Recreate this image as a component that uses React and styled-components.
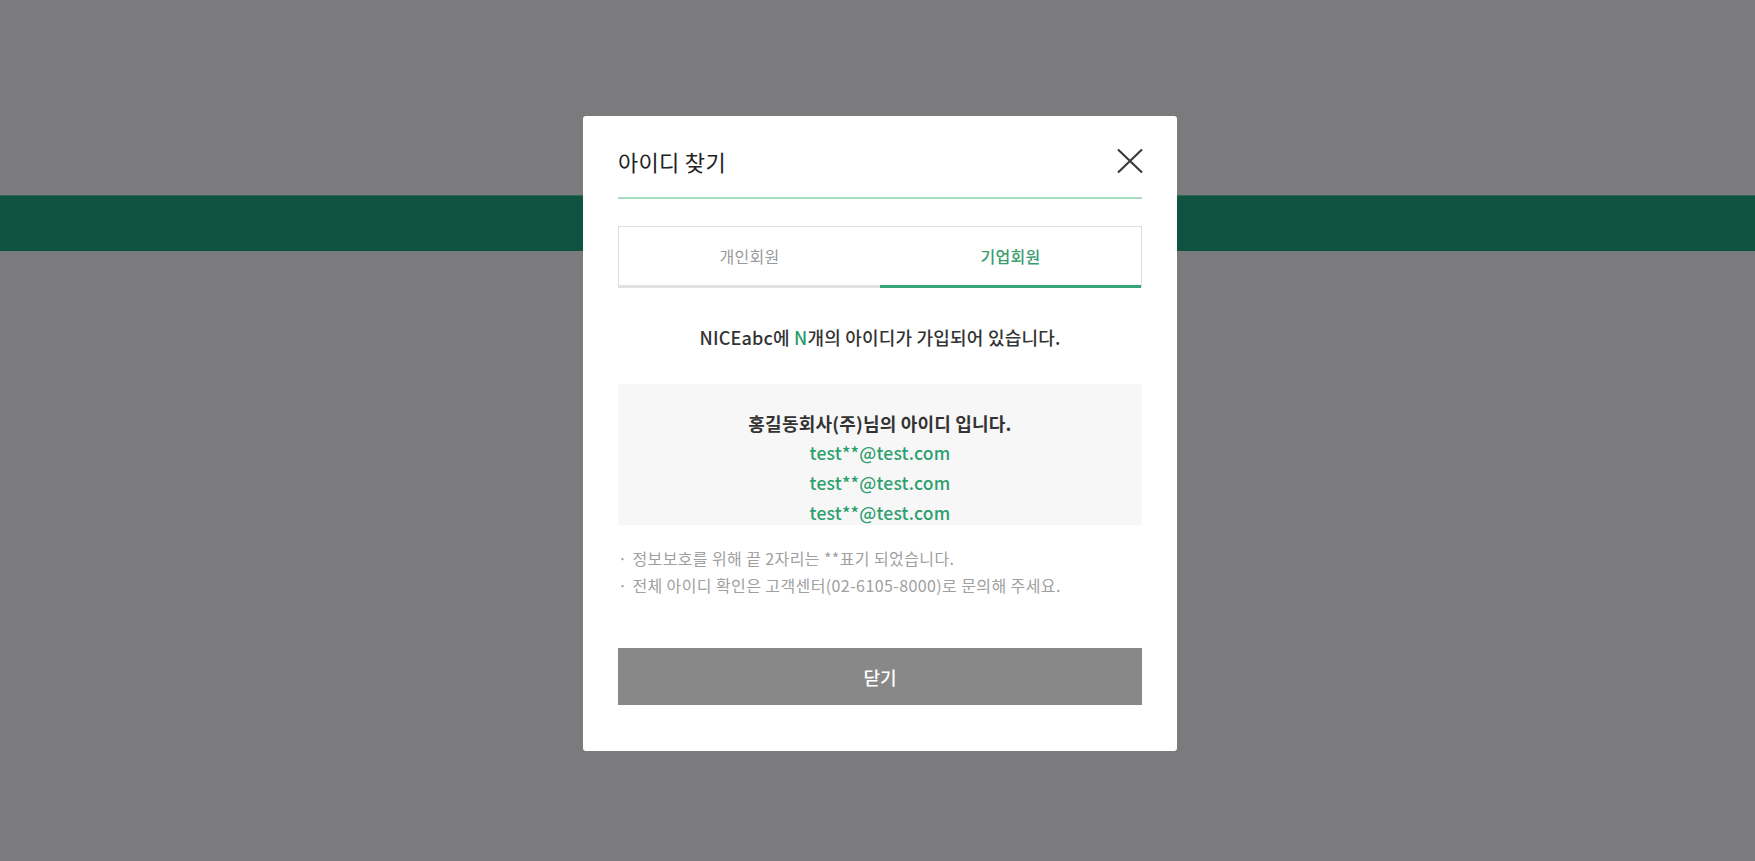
import React from "react";
import styled, { createGlobalStyle } from "styled-components";

const GlobalStyle = createGlobalStyle`
  html, body {
    margin: 0;
    padding: 0;
    height: 100%;
    background-color: #7b7b7d;
    font-family: "Noto Sans CJK KR", "Noto Sans", sans-serif;
  }
  #root {
    min-height: 100%;
  }
`;

const SPage = styled.div`
  height: 861px;
  background-color: #7b7b7d;
  padding-top: 195px;
  box-sizing: border-box;
`;

const GreenBand = styled.div`
  height: 56px;
  background-color: #0e5340;
  border-top: 1px solid #2b6a58;
  box-sizing: border-box;
`;

const Overlay = styled.div`
  position: fixed;
  top: 0;
  left: 0;
  width: 100vw;
  height: 100vh;
  display: flex;
  align-items: flex-start;
  justify-content: center;
  padding: 116px 0 0 5px;
  box-sizing: border-box;
`;

const SModal = styled.div`
  width: 594px;
  height: 635px;
  background-color: #fff;
  border-radius: 3px;
  padding: 0 35px 46px;
  box-sizing: border-box;
  display: flex;
  flex-direction: column;
`;

const Header = styled.div`
  display: flex;
  align-items: center;
  justify-content: space-between;
  padding: 30px 0 21px;
  border-bottom: 2px solid #a6dcc0;
  h2 {
    margin: 0;
    font-size: 22px;
    line-height: 30px;
    font-weight: 400;
    letter-spacing: 0.3px;
    color: #222;
  }
`;

const CloseButton = styled.button`
  width: 28px;
  height: 28px;
  padding: 0;
  margin-right: -2px;
  border: none;
  background: none;
  cursor: pointer;
  svg {
    display: block;
  }
`;

const Tabs = styled.div`
  margin-top: 27px;
  display: flex;
  border: 1px solid #dedede;
  border-bottom: none;
`;

const Tab = styled.div`
  flex: 1;
  position: relative;
  height: 58px;
  display: flex;
  align-items: center;
  justify-content: center;
  font-size: 16px;
  letter-spacing: 0.3px;
  color: ${(p) => (p.active ? "#3a9d6f" : "#9a9a9a")};
  font-weight: ${(p) => (p.active ? 500 : 400)};
  border-bottom: 3px solid ${(p) => (p.active ? "#3aa574" : "#e2e2e2")};
  cursor: pointer;

  & + &::before {
    content: "";
    position: absolute;
    left: 0;
    top: 14px;
    height: 23px;
    border-left: 1px solid #e6e6e6;
  }
`;

const Message = styled.p`
  margin: 37px 0 0;
  text-align: center;
  font-size: 18px;
  line-height: 24px;
  font-weight: 500;
  letter-spacing: 0.2px;
  color: #333;
  em {
    font-style: normal;
    color: #2a9d6e;
  }
`;

const ResultBox = styled.div`
  margin-top: 35px;
  height: 141px;
  overflow: hidden;
  background-color: #f7f7f7;
  padding-top: 24px;
  box-sizing: border-box;
  text-align: center;
  font-size: 17.5px;
  line-height: 30px;

  h3 {
    margin: 0;
    font-size: 18px;
    font-weight: 700;
    letter-spacing: 0.2px;
    color: #333;
  }
`;

const IdItem = styled.div`
  color: #2e9f6f;
  font-weight: 500;
  letter-spacing: 0.2px;
`;

const Notes = styled.ul`
  margin: 20px 0 0;
  padding: 0;
  list-style: none;
  li {
    font-size: 16px;
    line-height: 27px;
    color: #a0a0a0;
    letter-spacing: 0.4px;
  }
  li::before {
    content: "·";
    margin-right: 5px;
  }
`;

const ConfirmButton = styled.button`
  margin-top: auto;
  height: 57px;
  width: 100%;
  border: none;
  background-color: #888888;
  color: #fff;
  font-family: inherit;
  font-size: 18px;
  font-weight: 500;
  cursor: pointer;
`;

const ids = ["test**@test.com", "test**@test.com", "test**@test.com"];

export default function App() {
  return (
    <>
      <GlobalStyle />
      <SPage>
        <GreenBand />
      </SPage>
      <Overlay>
        <SModal>
          <Header>
            <h2>아이디 찾기</h2>
            <CloseButton aria-label="닫기">
              <svg width="28" height="28" viewBox="0 0 28 28">
                <path
                  d="M2 2.5 L26 25.5 M26 2.5 L2 25.5"
                  stroke="#3a3a3a"
                  strokeWidth="2.2"
                  fill="none"
                />
              </svg>
            </CloseButton>
          </Header>
          <Tabs>
            <Tab>개인회원</Tab>
            <Tab active>기업회원</Tab>
          </Tabs>
          <Message>
            NICEabc에 <em>N</em>개의 아이디가 가입되어 있습니다.
          </Message>
          <ResultBox>
            <h3>홍길동회사(주)님의 아이디 입니다.</h3>
            {ids.map((id, i) => (
              <IdItem key={i}>{id}</IdItem>
            ))}
          </ResultBox>
          <Notes>
            <li>정보보호를 위해 끝 2자리는 **표기 되었습니다.</li>
            <li>전체 아이디 확인은 고객센터(02-6105-8000)로 문의해 주세요.</li>
          </Notes>
          <ConfirmButton>닫기</ConfirmButton>
        </SModal>
      </Overlay>
    </>
  );
}
